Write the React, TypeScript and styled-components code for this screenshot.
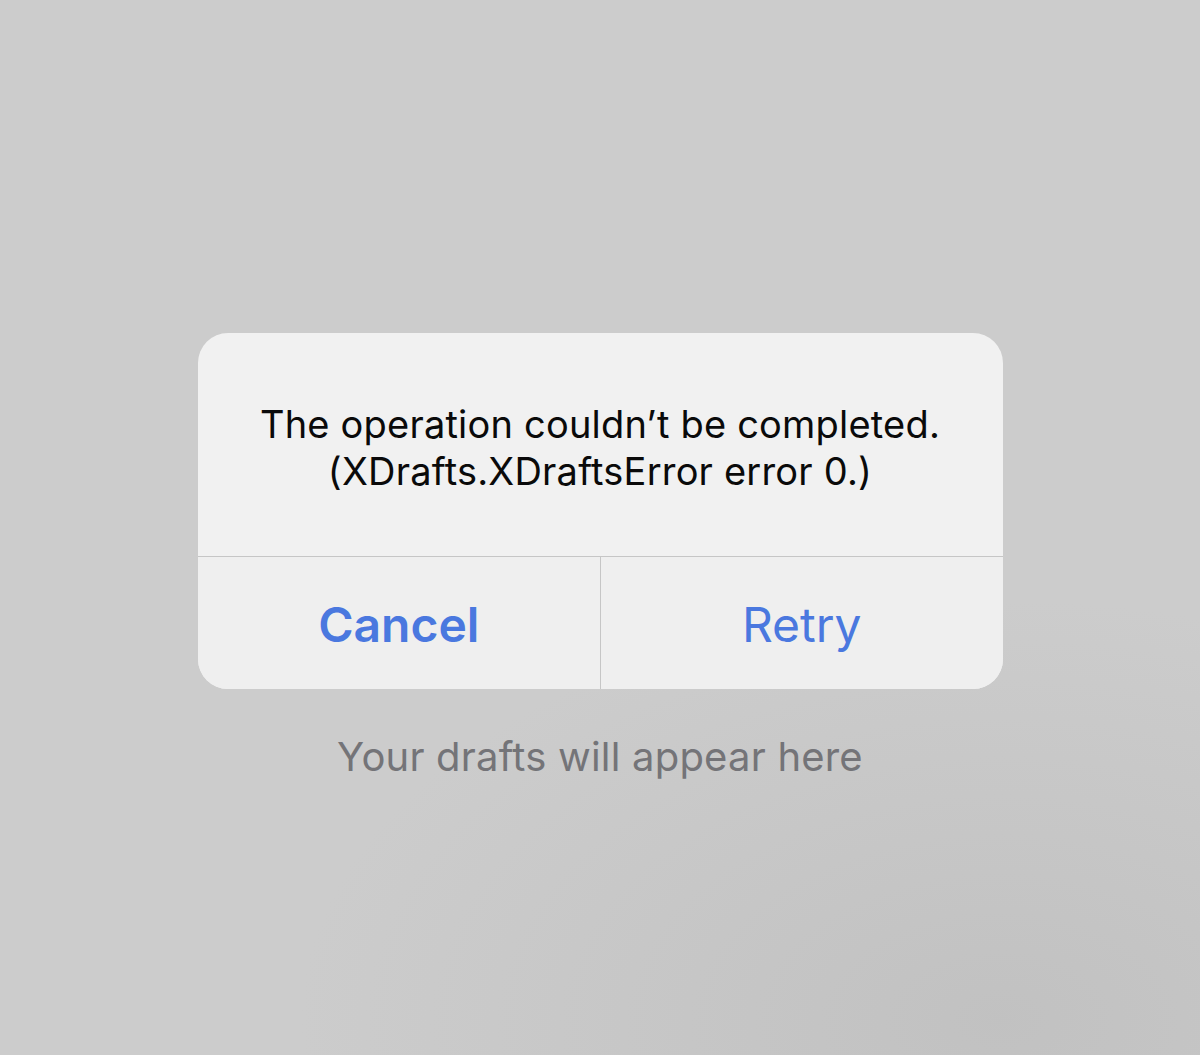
import React from 'react';
import styled, { createGlobalStyle } from 'styled-components';

const GlobalStyle = createGlobalStyle`
  html, body {
    margin: 0;
    padding: 0;
  }
  body {
    font-family: Inter, "Noto Sans", "Liberation Sans", sans-serif;
    -webkit-font-smoothing: antialiased;
  }
`;

const Screen = styled.div`
  width: 1200px;
  height: 1055px;
  box-sizing: border-box;
  padding-top: 333px;
  display: flex;
  flex-direction: column;
  align-items: center;
  background:
    radial-gradient(ellipse 700px 420px at 1000px 1020px, rgba(192, 192, 192, 0.9), rgba(204, 204, 204, 0) 100%),
    #cccccc;
`;

const Alert = styled.div`
  width: 805px;
  height: 356px;
  border-radius: 30px;
  background: #f1f1f1;
  display: flex;
  flex-direction: column;
  overflow: hidden;
`;

const Message = styled.div`
  height: 224px;
  box-sizing: border-box;
  padding-top: 68px;
  border-bottom: 1px solid #c6c6c6;
  text-align: center;
  color: #0a0a0a;
  font-size: 38px;
  line-height: 47px;
  letter-spacing: 0.2px;
`;

const Actions = styled.div`
  flex: 1;
  display: grid;
  grid-template-columns: 1fr 1fr;
`;

const ActionButton = styled.button<{ primary?: boolean }>`
  border: none;
  background: #efefef;
  margin: 0;
  padding: 2px 0 0;
  font-family: inherit;
  font-size: 48px;
  font-weight: ${p => (p.primary ? 600 : 400)};
  color: #4a78df;
  cursor: pointer;

  & + & {
    border-left: 1px solid #c6c6c6;
  }
`;

const EmptyHint = styled.div`
  margin-top: 43px;
  font-size: 40px;
  color: #747478;
  letter-spacing: 0.2px;
`;

export default function App() {
  return (
    <>
      <GlobalStyle />
      <Screen>
        <Alert>
          <Message>
            The operation couldn’t be completed.
            <br />
            (XDrafts.XDraftsError error 0.)
          </Message>
          <Actions>
            <ActionButton primary>Cancel</ActionButton>
            <ActionButton>Retry</ActionButton>
          </Actions>
        </Alert>
        <EmptyHint>Your drafts will appear here</EmptyHint>
      </Screen>
    </>
  );
}
